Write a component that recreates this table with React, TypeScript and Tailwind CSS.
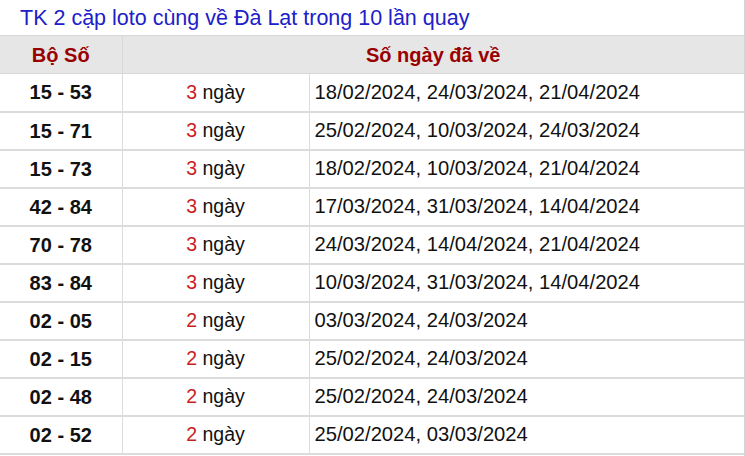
import React from 'react';

const rows: [string, number, string][] = [
  ['15 - 53', 3, '18/02/2024, 24/03/2024, 21/04/2024'],
  ['15 - 71', 3, '25/02/2024, 10/03/2024, 24/03/2024'],
  ['15 - 73', 3, '18/02/2024, 10/03/2024, 21/04/2024'],
  ['42 - 84', 3, '17/03/2024, 31/03/2024, 14/04/2024'],
  ['70 - 78', 3, '24/03/2024, 14/04/2024, 21/04/2024'],
  ['83 - 84', 3, '10/03/2024, 31/03/2024, 14/04/2024'],
  ['02 - 05', 2, '03/03/2024, 24/03/2024'],
  ['02 - 15', 2, '25/02/2024, 24/03/2024'],
  ['02 - 48', 2, '25/02/2024, 24/03/2024'],
  ['02 - 52', 2, '25/02/2024, 03/03/2024'],
];

export default function App() {
  return (
    <div className="w-[746px] h-[456px] overflow-hidden bg-white border-r-2 border-[#d4d4d4] font-['Liberation_Sans',Arial,sans-serif] text-[#111]">
      {/* Title */}
      <h2 className="h-[35px] pl-[20px] pt-[6px] text-[21.5px] leading-[24px] text-[#2020c8]">
        TK 2 cặp loto cùng về Đà Lạt trong 10 lần quay
      </h2>

      <table className="w-[744px] border-collapse table-fixed">
        <colgroup>
          <col className="w-[122px]" />
          <col className="w-[187px]" />
          <col />
        </colgroup>
        <thead>
          <tr className="h-[38px] bg-[#e6e6e6] border-y border-[#d8d8d8]">
            <th className="text-[20px] font-bold text-[#990000] text-center border-r border-[#d8d8d8]">Bộ Số</th>
            <th colSpan={2} className="text-[20px] font-bold text-[#990000] text-center">Số ngày đã về</th>
          </tr>
        </thead>
        <tbody>
          {rows.map(([pair, n, dates]) => (
            <tr key={pair} className="h-[38px] border-b-2 border-[#dcdcdc]">
              <td className="text-center text-[20px] font-bold border-r border-[#dcdcdc]">{pair}</td>
              <td className="text-center text-[19.5px] border-r border-[#dcdcdc]">
                <span className="text-[#c81e1e]">{n}</span> ngày
              </td>
              <td className="pl-[5px] text-[20.2px]">{dates}</td>
            </tr>
          ))}
        </tbody>
      </table>
    </div>
  );
}
